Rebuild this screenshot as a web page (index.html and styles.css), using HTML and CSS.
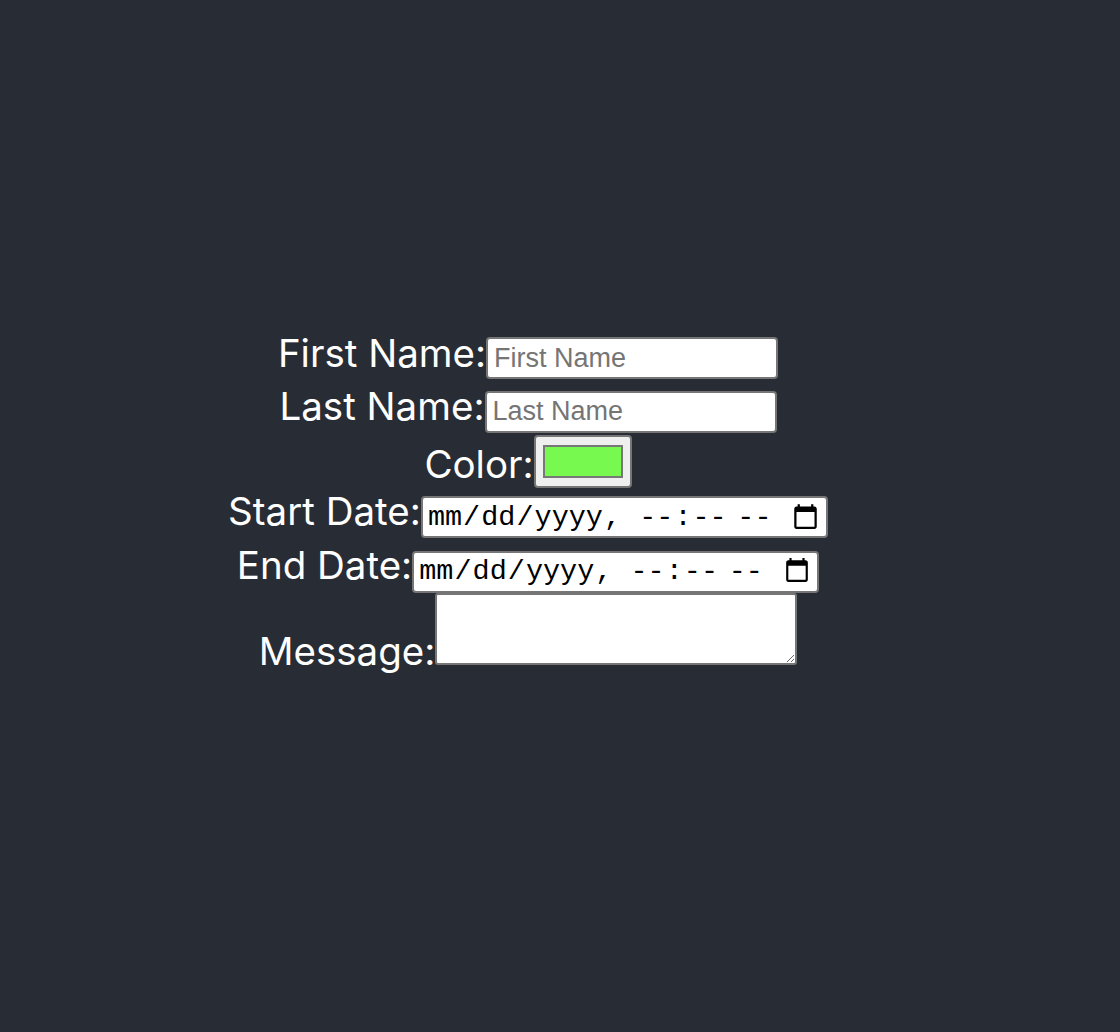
FILE: index.html
```html
<!DOCTYPE html>
<html lang="en">
<head>
<meta charset="utf-8">
<title>Form</title>
<link rel="stylesheet" href="styles.css">
</head>
<body>
<div class="app">
  <form class="form">
    <div class="row"><label class="lbl" for="fn">First Name:</label><input class="text" id="fn" type="text" placeholder="First Name"></div>
    <div class="row"><label class="lbl" for="ln">Last Name:</label><input class="text" id="ln" type="text" placeholder="Last Name"></div>
    <div class="row"><label class="lbl" for="co">Color:</label><input class="color" id="co" type="color" value="#77f94f"></div>
    <div class="row"><label class="lbl" for="sd">Start Date:</label><input class="date" id="sd" type="datetime-local"></div>
    <div class="row"><label class="lbl" for="ed">End Date:</label><input class="date date-last" id="ed" type="datetime-local"></div>
    <div class="row"><label class="lbl" for="msg">Message:</label><textarea class="msg" id="msg"></textarea></div>
  </form>
</div>
</body>
</html>
```

FILE: styles.css
```css
html, body {
  margin: 0;
  padding: 0;
}
body {
  background: #282c34;
  font-family: Inter, "Noto Sans", sans-serif;
}
.app {
  min-height: 100vh;
  display: flex;
  flex-direction: column;
  align-items: center;
  justify-content: center;
  color: #ffffff;
  font-size: 38.5px;
  padding-right: 64px;
  padding-bottom: 29px;
  box-sizing: border-box;
}
.row {
  text-align: center;
}
.lbl {
  color: #ffffff;
}
.text {
  box-sizing: border-box;
  width: 292px;
  height: 42px;
  margin: 0 0 4px;
  font-family: "Liberation Sans", Arial, sans-serif;
  font-size: 27px;
  padding: 1px 6px;
  border: 2px solid #767676;
  border-radius: 4px;
  background: #ffffff;
  color: #000;
  vertical-align: baseline;
}
.text::placeholder {
  color: #757575;
}
.color {
  box-sizing: border-box;
  width: 98px;
  height: 53px;
  margin: -2px 0 0;
  padding: 0;
  border: 2px solid #767676;
  border-radius: 4px;
  background: #efefef;
  vertical-align: baseline;
}
.color::-webkit-color-swatch-wrapper {
  padding: 8px 7px;
}
.color::-webkit-color-swatch {
  border: 2px solid #777777;
  border-radius: 0;
}
.date {
  box-sizing: border-box;
  width: 407px;
  height: 42px;
  margin: 0 0 4px;
  font-family: "Liberation Mono", "Courier New", monospace;
  font-size: 28.5px;
  padding: 1px 4px;
  border: 2px solid #767676;
  border-radius: 4px;
  background: #ffffff;
  color: #000;
}
.date-last {
  margin-bottom: 0;
}
.msg {
  box-sizing: border-box;
  width: 362px;
  height: 72px;
  margin: 0;
  border: 2px solid #767676;
  border-radius: 3px;
  background: #fff;
  vertical-align: baseline;
  font-size: 20px;
}
```
